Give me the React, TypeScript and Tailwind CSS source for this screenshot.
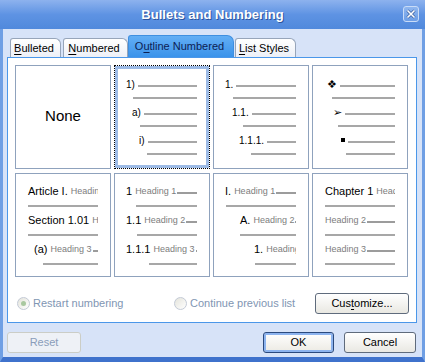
import type { ReactNode } from "react";

const LINE = "h-[2px] bg-[#a7a7a7]";

type TopRow = { pad: string; label?: ReactNode };
type Group = { pad: string; under: string; main?: string; head: string };

function U({ children }: { children: ReactNode }) {
  return <span className="underline underline-offset-[2px]">{children}</span>;
}

function TopCell({ rows, selected }: { rows: TopRow[]; selected?: boolean }) {
  return (
    <div
      className={
        selected
          ? "border border-dotted border-black bg-white pr-[12px] pt-[9px] shadow-[inset_0_0_0_3px_#9dbbe6]"
          : "border border-[#8fa2bd] bg-white pr-[12px] pt-[9px]"
      }
    >
      {rows.map((r, i) => (
        <div
          key={i}
          className={`flex h-[12px] items-end ${r.pad} ${i === 2 || i === 4 ? "mt-[4px]" : ""}`}
        >
          {r.label && (
            <span className="-mb-[3px] mr-[3px] shrink-0 text-[10px] leading-[10px] text-black">
              {r.label}
            </span>
          )}
          <div className={`${LINE} min-w-0 flex-1`} />
        </div>
      ))}
    </div>
  );
}

function HeadCell({ groups }: { groups: Group[] }) {
  return (
    <div className="overflow-hidden border border-[#8fa2bd] bg-white pr-[12px] pt-[11px]">
      {groups.map((g, i) => (
        <div key={i} className={i ? "mt-[7px]" : ""}>
          <div className={`flex h-[13px] items-center overflow-hidden whitespace-nowrap ${g.pad}`}>
            {g.main && <span className="mr-[3px] shrink-0 text-[11px] leading-[13px] text-black">{g.main}</span>}
            <span className="shrink-0 text-[9px] leading-[13px] text-[#7d7d7d]">{g.head}</span>
            <div className="ml-[1px] mt-[2px] h-[2px] min-w-0 flex-1 bg-[#9c9c9c]" />
          </div>
          <div className={`mt-[7px] ${g.under}`}>
            <div className={LINE} />
          </div>
        </div>
      ))}
    </div>
  );
}

function Radio({ checked, children }: { checked?: boolean; children: ReactNode }) {
  return (
    <div className="flex items-center gap-[3px]">
      <span className="flex h-[13px] w-[13px] items-center justify-center rounded-full border border-[#c3cad6] bg-gradient-to-br from-[#e4e4dc] to-white">
        {checked && <span className="h-[5px] w-[5px] rounded-full bg-[#a9c8a0]" />}
      </span>
      <span className="text-[11px] text-[#8196b3]">{children}</span>
    </div>
  );
}

function Tab({ w, active, children }: { w: string; active?: boolean; children: ReactNode }) {
  return (
    <div
      className={
        active
          ? `${w} flex h-[22px] items-center justify-center rounded-t-[3px] rounded-tr-[7px] border border-b-0 border-[#3f8fe0] bg-gradient-to-b from-[#62aef5] to-[#3a93ea] pr-[3px] text-[11px] text-[#0d2152]`
          : `${w} flex h-[19px] items-center justify-center rounded-t-[3px] rounded-tr-[6px] border border-b-0 border-[#97a5ba] bg-gradient-to-b from-white to-[#edf0f7] pr-[3px] text-[11px] text-black`
      }
    >
      {children}
    </div>
  );
}

const cell2: TopRow[] = [
  { pad: "pl-[11px]", label: "1)" },
  { pad: "pl-[18px]" },
  { pad: "pl-[17px]", label: "a)" },
  { pad: "pl-[25px]" },
  { pad: "pl-[24px]", label: "i)" },
  { pad: "pl-[32px]" },
];

const cell3: TopRow[] = [
  { pad: "pl-[11px]", label: "1." },
  { pad: "pl-[19px]" },
  { pad: "pl-[18px]", label: "1.1." },
  { pad: "pl-[29px]" },
  { pad: "pl-[25px]", label: "1.1.1." },
  { pad: "pl-[37px]" },
];

const cell4: TopRow[] = [
  { pad: "pl-[14px]", label: <span className="font-['DejaVu_Sans'] text-[11px] leading-[10px]">❖</span> },
  { pad: "pl-[19px]" },
  { pad: "pl-[20px]", label: <span className="font-['DejaVu_Sans'] text-[11px] font-bold leading-[10px]">➢</span> },
  { pad: "pl-[25px]" },
  { pad: "pl-[28px]", label: <span className="mb-[2px] inline-block h-[4px] w-[4px] bg-black" /> },
  { pad: "pl-[33px]" },
];

const article: Group[] = [
  { pad: "pl-[12px]", under: "pl-[12px]", main: "Article I.", head: "Heading 1" },
  { pad: "pl-[12px]", under: "pl-[12px]", main: "Section 1.01", head: "Heading 2" },
  { pad: "pl-[18px]", under: "pl-[27px]", main: "(a)", head: "Heading 3" },
];

const legal: Group[] = [
  { pad: "pl-[11px]", under: "pl-[21px]", main: "1", head: "Heading 1" },
  { pad: "pl-[11px]", under: "pl-[22px]", main: "1.1", head: "Heading 2" },
  { pad: "pl-[11px]", under: "pl-[34px]", main: "1.1.1", head: "Heading 3" },
];

const roman: Group[] = [
  { pad: "pl-[11px]", under: "pl-[12px]", main: "I.", head: "Heading 1" },
  { pad: "pl-[26px]", under: "pl-[26px]", main: "A.", head: "Heading 2" },
  { pad: "pl-[40px]", under: "pl-[41px]", main: "1.", head: "Heading 3" },
];

const chapter: Group[] = [
  { pad: "pl-[12px]", under: "pl-[12px]", main: "Chapter 1", head: "Heading 1" },
  { pad: "pl-[12px]", under: "pl-[12px]", head: "Heading 2" },
  { pad: "pl-[12px]", under: "pl-[12px]", head: "Heading 3" },
];

export default function App() {
  return (
    <div className="flex h-[362px] w-[425px] flex-col overflow-hidden bg-[#d7e3f8] font-['Liberation_Sans',Arial,sans-serif]">
      {/* title bar */}
      <div className="relative flex h-[29px] shrink-0 items-center justify-center bg-gradient-to-b from-[#8db2ee] via-[#5e93e3] to-[#5089dc]">
        <span className="text-[13px] font-bold text-white [text-shadow:1px_1px_0_#2d559e]">
          Bullets and Numbering
        </span>
        <button className="absolute right-[6px] top-[6px] flex h-[16px] w-[16px] items-center justify-center rounded-[3px] border border-[#c9dcf7] bg-gradient-to-b from-[#8fb6ef] to-[#6d9ee6]">
          <svg width="10" height="10" viewBox="0 0 10 10">
            <path d="M1.5 1.5 8.5 8.5M8.5 1.5 1.5 8.5" stroke="#3a5f9e" strokeWidth="3" />
            <path d="M1.5 1.5 8.5 8.5M8.5 1.5 1.5 8.5" stroke="#fff" strokeWidth="1.6" />
          </svg>
        </button>
      </div>

      {/* body */}
      <div className="flex flex-1 flex-col border-x-[3px] border-b-[5px] border-x-[#6f9fe4] border-b-[#3f72cc] pl-[4px] pt-[6px]">
        <div className="flex items-end pl-[3px]">
          <Tab w="w-[51px]">
            <span>
              <U>B</U>ulleted
            </span>
          </Tab>
          <div className="ml-[2px]">
            <Tab w="w-[65px]">
              <span>
                <U>N</U>umbered
              </span>
            </Tab>
          </div>
          <Tab w="w-[106px]" active>
            <span>
              O<U>u</U>tline Numbered
            </span>
          </Tab>
          <div className="ml-[1px]">
            <Tab w="w-[61px]">
              <span>
                <U>L</U>ist Styles
              </span>
            </Tab>
          </div>
        </div>

        <div className="h-[266px] w-[410px] border border-[#4b97e9] bg-white p-[7px]">
          <div className="grid grid-cols-[repeat(4,96px)] grid-rows-[repeat(2,104px)] gap-x-[3px] gap-y-[4px]">
            <div className="flex items-center justify-center border border-[#8fa2bd] bg-white pb-[2px] text-[15px] text-black">
              None
            </div>
            <TopCell rows={cell2} selected />
            <TopCell rows={cell3} />
            <TopCell rows={cell4} />
            <HeadCell groups={article} />
            <HeadCell groups={legal} />
            <HeadCell groups={roman} />
            <HeadCell groups={chapter} />
          </div>

          <div className="mt-[16px] flex h-[21px] items-center pl-[2px]">
            <div className="w-[157px]">
              <Radio checked>Restart numbering</Radio>
            </div>
            <div className="flex-1">
              <Radio>Continue previous list</Radio>
            </div>
            <button className="h-[21px] w-[94px] rounded-[3px] border border-[#5f6b7c] bg-gradient-to-b from-white to-[#e9e8e2] text-[11px] text-black">
              Cus<U>t</U>omize...
            </button>
          </div>
        </div>

        <div className="mr-[5px] mt-[9px] flex h-[21px] items-center justify-between">
          <button className="h-[21px] w-[74px] rounded-[3px] border border-[#cbcdc6] bg-[#eef1f6] text-[11px] text-[#8a9dba]">
            Reset
          </button>
          <div className="mr-[1px] flex gap-[10px]">
            <button className="h-[21px] w-[71px] rounded-[3px] border border-[#2b4a7e] bg-gradient-to-b from-white to-[#eceae3] text-[11px] text-black shadow-[inset_0_0_0_2px_#8db4ef]">
              OK
            </button>
            <button className="h-[21px] w-[72px] rounded-[3px] border border-[#5f6b7c] bg-gradient-to-b from-white to-[#e9e8e2] text-[11px] text-black">
              Cancel
            </button>
          </div>
        </div>
      </div>
    </div>
  );
}
